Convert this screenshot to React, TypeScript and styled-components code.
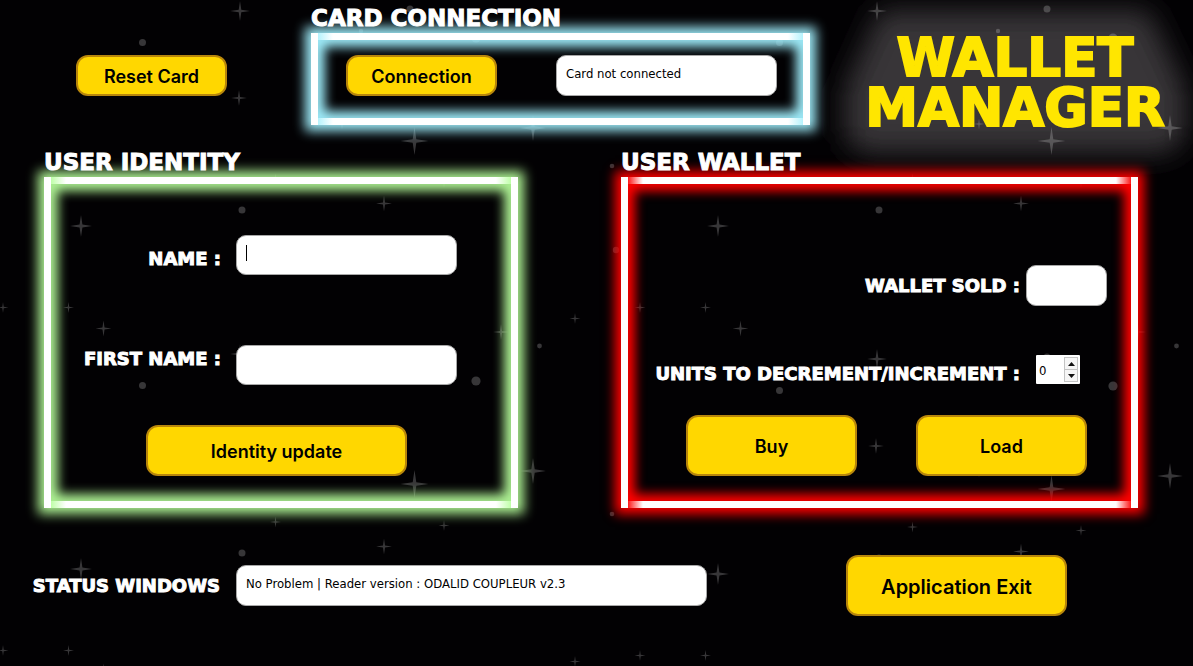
import React, { useState } from 'react';
import styled, { createGlobalStyle } from 'styled-components';

const GlobalStyle = createGlobalStyle`
  *, *::before, *::after { box-sizing: border-box; }
  body { margin: 0; background: #020103; }
`;

const display = `'DejaVu Sans', sans-serif`;
const field = `'DejaVu Sans Condensed', 'Noto Sans', sans-serif`;

const Page = styled.main`
  position: relative;
  z-index: 0;
  overflow: hidden;
  min-width: 1100px;
  min-height: 100vh;
  color: #fff;
`;

const Sky = styled.svg`
  position: absolute;
  inset: 0;
  width: 100%;
  height: 100%;
  z-index: -1;
`;

const Header = styled.header`
  display: grid;
  grid-template-columns: 311fr 499fr 383fr;
  height: 144px;
`;

const ResetArea = styled.div`
  display: flex;
  justify-content: flex-end;
  align-items: flex-start;
  padding: 55px 84px 0 0;
`;

const Title = styled.h2`
  margin: 0;
  padding-top: 3px;
  font: 700 23px/30px ${display};
  white-space: nowrap;
  -webkit-text-stroke: 1px #fff;
`;

const Frame = styled.div<{ $glow: string; $core: string }>`
  border: 7px solid transparent;
  background:
    linear-gradient(#fff, #fff) left / 7px 100%,
    linear-gradient(#fff, #fff) right / 7px 100%,
    linear-gradient(90deg, ${p => p.$core} 7px, #fff 22px, #fff calc(100% - 22px), ${p => p.$core} calc(100% - 7px)) top / 100% 7px,
    linear-gradient(90deg, ${p => p.$core} 7px, #fff 22px, #fff calc(100% - 22px), ${p => p.$core} calc(100% - 7px)) bottom / 100% 7px;
  background-repeat: no-repeat;
  background-origin: border-box;
  background-clip: border-box;
  box-shadow: 0 0 11px 6px ${p => p.$glow}, inset 0 0 11px 7px ${p => p.$glow};
`;

const CardFrame = styled(Frame)`
  display: flex;
  justify-content: space-between;
  padding: 15px 26px 22px 28px;
`;

const Button = styled.button<{ $w: number; $h: number; $size?: number }>`
  width: ${p => p.$w}px;
  height: ${p => p.$h}px;
  padding: 2px 0 0;
  border: 2px solid #b8860b;
  border-radius: 12px;
  background: #ffd700;
  color: #000;
  font: 600 ${p => p.$size ?? 18}px Inter, sans-serif;
  cursor: pointer;
`;

const TextBox = styled.input<{ $w?: number; $h?: number }>`
  width: ${p => (p.$w ? `${p.$w}px` : '100%')};
  height: ${p => p.$h ?? 41}px;
  padding: 0 9px 4px;
  border: 1px solid #a8a8a8;
  border-radius: 10px;
  outline: none;
  background: #fff;
  color: #000;
  font: 13px ${field};
`;

const Logo = styled.h1`
  position: relative;
  margin: 0;
  padding: 33px 0 0 27px;
  font: 700 53px/50px ${display};
  text-align: center;
  color: #ffe600;
  -webkit-text-stroke: 2px #ffe600;
`;

const LogoLine = styled.span`
  display: block;
`;

const Haze = styled.svg`
  position: absolute;
  left: 0;
  top: 0;
  width: 100%;
  height: 190px;
  overflow: visible;
  z-index: -2;
`;

const Panels = styled.div`
  display: grid;
  grid-template-columns: 474fr 517fr;
  column-gap: 103px;
  padding: 0 55px 0 44px;
`;

const IdentityFrame = styled(Frame)`
  padding: 51px 54px 25px 0;
`;

const IdentityFields = styled.div`
  display: grid;
  grid-template-columns: 1fr 221px;
  grid-template-rows: 47px 40px;
  gap: 63px 15px;
`;

const Label = styled.label<{ $top?: boolean }>`
  align-self: ${p => (p.$top ? 'start' : 'center')};
  text-align: right;
  font: 700 18px/28px ${display};
  white-space: nowrap;
  -webkit-text-stroke: 1px #fff;
`;

const FieldSlot = styled.div`
  position: relative;
`;

const Caret = styled.span`
  position: absolute;
  left: 10px;
  top: 10px;
  width: 1px;
  height: 16px;
  background: #000;
`;

const IdentityAction = styled.div`
  display: flex;
  justify-content: flex-end;
  padding: 40px 50px 0 0;
`;

const WalletFrame = styled(Frame)`
  padding: 81px 24px 25px 0;
`;

const WalletFields = styled.div`
  display: grid;
  grid-template-columns: 1fr 81px;
  grid-template-rows: 41px 37px;
  gap: 49px 6px;
`;

const WalletActions = styled.div`
  display: flex;
  justify-content: flex-end;
  gap: 59px;
  padding: 23px 20px 0 0;
`;

const Spin = styled.div`
  justify-self: start;
  display: flex;
  width: 44px;
  height: 29px;
  margin-left: 10px;
  padding: 2px;
  border-radius: 1px;
  background: #fff;
`;

const SpinInput = styled.input`
  flex: 1;
  min-width: 0;
  padding: 2px 1px 0;
  border: 0;
  outline: none;
  background: none;
  color: #000;
  font: 13px ${field};
  appearance: textfield;
  -moz-appearance: textfield;
  &::-webkit-inner-spin-button { appearance: none; margin: 0; }
`;

const SpinButtons = styled.div`
  display: flex;
  flex-direction: column;
`;

const Step = styled.button`
  display: grid;
  place-items: center;
  flex: 1;
  width: 14px;
  padding: 0;
  border: 1px solid #c4c4c4;
  background: #f6f6f6;
  & + & { border-top: 0; }
`;

const Footer = styled.footer`
  display: grid;
  grid-template-columns: 220px 1fr 221px;
  align-items: center;
  padding: 47px 126px 50px 0;
`;

const StatusSlot = styled.div`
  padding: 0 139px 0 16px;
`;

const stars = [
  [240, 11, 10], [239, 98, 8], [81, 226, 11], [3, 307.5, 5.5], [68.5, 307.5, 5.5],
  [103.5, 328.5, 8], [384, 203.5, 8], [501, 332, 8], [575, 318.5, 5.5], [414.5, 141, 14],
  [533, 128, 13], [342, 124, 5.5], [275.5, 179, 5.5], [444, 182.5, 5.5],
];

const dots = [
  [142.5, 42.5, 3.5], [410, 9, 3.5], [361, 31, 2.2], [476, 38, 4.6],
  [242, 210, 3.5], [539.5, 346, 2.4], [-25, 166, 2.3], [-21, 250, 3.2],
];

const starPath = (x: number, y: number, r: number) => {
  const k = r * 0.13;
  return `M${x} ${y - r}L${x + k} ${y - k}L${x + r} ${y}L${x + k} ${y + k}L${x} ${y + r}L${x - k} ${y + k}L${x - r} ${y}L${x - k} ${y - k}Z`;
};

function StarField() {
  return (
    <Sky aria-hidden="true">
      <defs>
        <g id="stars" fill="#fff" fillOpacity="0.21">
          {stars.map(([x, y, r]) => <path key={`${x}-${y}`} d={starPath(x, y, r)} />)}
          {dots.map(([x, y, r]) => <circle key={`${x}-${y}`} cx={x} cy={y} r={r} />)}
        </g>
      </defs>
      <use href="#stars" />
      <use href="#stars" x="637" />
      <use href="#stars" y="343" />
      <use href="#stars" x="637" y="348" />
    </Sky>
  );
}

export default function App() {
  const [name, setName] = useState('');
  const [units, setUnits] = useState(0);

  return (
    <Page>
      <GlobalStyle />
      <StarField />
      <Header>
        <ResetArea>
          <Button $w={151} $h={41}>Reset Card</Button>
        </ResetArea>
        <section>
          <Title>CARD CONNECTION</Title>
          <CardFrame $glow="#9deaf8" $core="#b5f3fd">
            <Button $w={151} $h={41}>Connection</Button>
            <TextBox $w={221} aria-label="Card state" readOnly value="Card not connected" />
          </CardFrame>
        </section>
        <Logo>
          <Haze viewBox="0 0 383 190" aria-hidden="true">
            <defs>
              <filter id="haze" x="-20%" y="-40%" width="140%" height="180%">
                <feGaussianBlur stdDeviation="14" />
              </filter>
            </defs>
            <path d="M70 10H338L376 90V136L358 153H50L34 136V90Z" fill="#383638" filter="url(#haze)" />
          </Haze>
          <LogoLine>WALLET</LogoLine>
          <LogoLine>MANAGER</LogoLine>
        </Logo>
      </Header>

      <Panels>
        <section>
          <Title>USER IDENTITY</Title>
          <IdentityFrame $glow="#adf193" $core="#bfffa8">
            <IdentityFields>
              <Label htmlFor="name">NAME :</Label>
              <FieldSlot>
                <TextBox id="name" $h={40} value={name} onChange={e => setName(e.target.value)} />
                {name === '' && <Caret />}
              </FieldSlot>
              <Label htmlFor="first-name" $top>FIRST NAME :</Label>
              <TextBox id="first-name" $h={40} />
            </IdentityFields>
            <IdentityAction>
              <Button $w={261} $h={51}>Identity update</Button>
            </IdentityAction>
          </IdentityFrame>
        </section>

        <section>
          <Title>USER WALLET</Title>
          <WalletFrame $glow="#ff0000" $core="#ff1a1a">
            <WalletFields>
              <Label htmlFor="sold">WALLET SOLD :</Label>
              <TextBox id="sold" />
              <Label htmlFor="units">UNITS TO DECREMENT/INCREMENT :</Label>
              <Spin>
                <SpinInput id="units" type="number" value={units} onChange={e => setUnits(Number(e.target.value))} />
                <SpinButtons>
                  <Step aria-label="Increase" onClick={() => setUnits(units + 1)}>
                    <svg width="7" height="4" viewBox="0 0 7 4"><path d="M0 4L3.5 0L7 4Z" fill="#111" /></svg>
                  </Step>
                  <Step aria-label="Decrease" onClick={() => setUnits(Math.max(0, units - 1))}>
                    <svg width="7" height="4" viewBox="0 0 7 4"><path d="M0 0L3.5 4L7 0Z" fill="#111" /></svg>
                  </Step>
                </SpinButtons>
              </Spin>
            </WalletFields>
            <WalletActions>
              <Button $w={171} $h={61}>Buy</Button>
              <Button $w={171} $h={61}>Load</Button>
            </WalletActions>
          </WalletFrame>
        </section>
      </Panels>

      <Footer>
        <Label htmlFor="status">STATUS WINDOWS</Label>
        <StatusSlot>
          <TextBox id="status" readOnly value="No Problem | Reader version : ODALID COUPLEUR v2.3" />
        </StatusSlot>
        <Button $w={221} $h={61} $size={20}>Application Exit</Button>
      </Footer>
    </Page>
  );
}
